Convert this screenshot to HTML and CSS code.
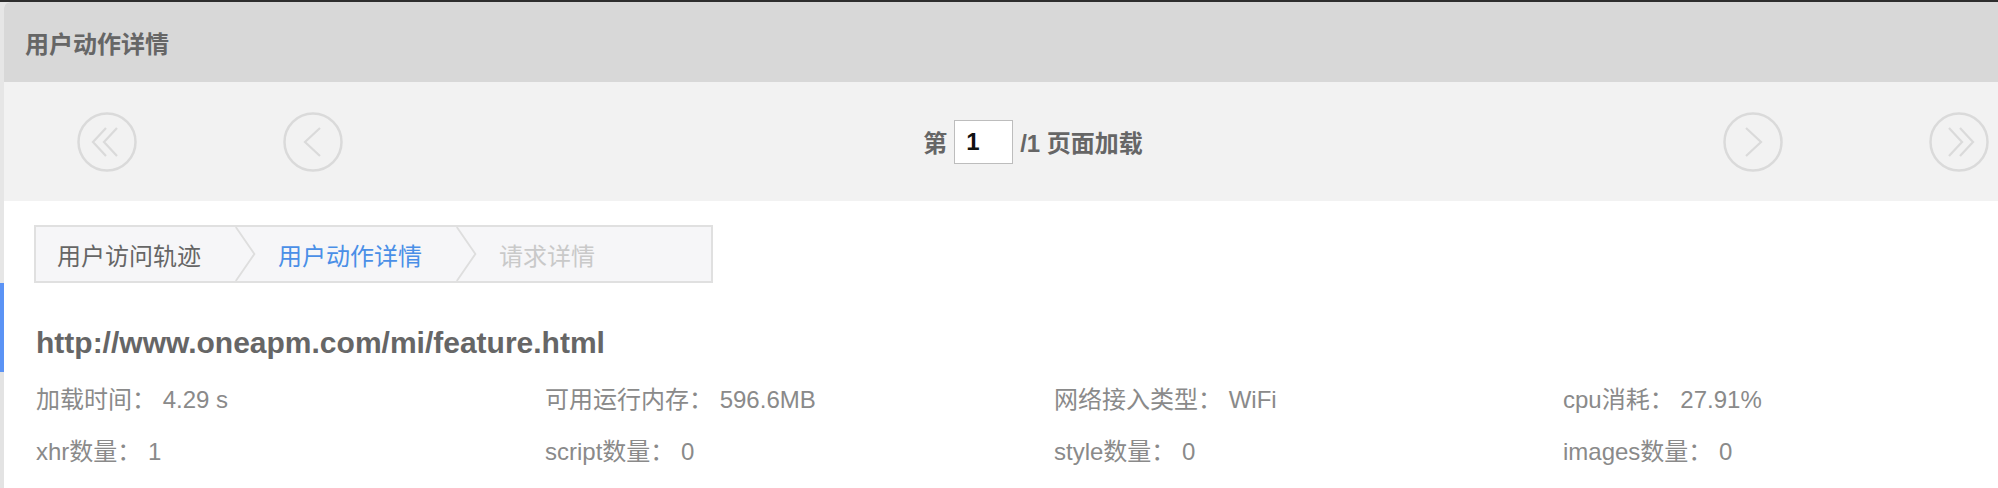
FILE: index.html
```html
<!DOCTYPE html>
<html lang="zh-CN">
<head>
<meta charset="utf-8">
<title>用户动作详情</title>
<link rel="stylesheet" href="styles.css">
</head>
<body>
<div class="topbar"></div>
<div class="layout">
  <div class="rail">
    <div class="rail-top"></div>
    <div class="rail-active"></div>
    <div class="rail-rest"></div>
  </div>
  <div class="panel">
    <div class="panel-header">用户动作详情</div>
    <div class="pager">
      <svg class="pager-btn" viewBox="0 0 60 60" width="60" height="60"><circle cx="30" cy="30" r="28.5"/><polyline points="29,16 16,30 29,44"/><polyline points="40,16 27,30 40,44"/></svg>
      <svg class="pager-btn" viewBox="0 0 60 60" width="60" height="60"><circle cx="30" cy="30" r="28.5"/><polyline points="37,16 22,30 37,44"/></svg>
      <div class="pager-center">
        <span class="pager-label">第</span>
        <input class="pager-input" type="text" value="1">
        <span class="pager-label">/1 页面加载</span>
      </div>
      <svg class="pager-btn" viewBox="0 0 60 60" width="60" height="60"><circle cx="30" cy="30" r="28.5"/><polyline points="23,16 38,30 23,44"/></svg>
      <svg class="pager-btn" viewBox="0 0 60 60" width="60" height="60"><circle cx="30" cy="30" r="28.5"/><polyline points="20,16 33,30 20,44"/><polyline points="31,16 44,30 31,44"/></svg>
    </div>
    <div class="content">
      <div class="crumbs">
        <span class="crumb">用户访问轨迹</span>
        <svg class="crumb-sep" viewBox="0 0 22 58" width="22" height="58"><polyline points="0,0 20,29 0,58"/></svg>
        <span class="crumb crumb-active">用户动作详情</span>
        <svg class="crumb-sep" viewBox="0 0 22 58" width="22" height="58"><polyline points="0,0 20,29 0,58"/></svg>
        <span class="crumb crumb-disabled">请求详情</span>
      </div>
      <div class="url">http://www.oneapm.com/mi/feature.html</div>
      <div class="stats">
        <div class="stat">加载时间： 4.29 s</div>
        <div class="stat">可用运行内存： 596.6MB</div>
        <div class="stat">网络接入类型： WiFi</div>
        <div class="stat">cpu消耗： 27.91%</div>
        <div class="stat">xhr数量： 1</div>
        <div class="stat">script数量： 0</div>
        <div class="stat">style数量： 0</div>
        <div class="stat">images数量： 0</div>
      </div>
    </div>
  </div>
</div>
</body>
</html>
```
FILE: styles.css
```css
html, body {
  margin: 0;
  padding: 0;
}
body {
  background: #ffffff;
  overflow: hidden;
  font-family: "Liberation Sans", "Noto Sans CJK SC", sans-serif;
  width: 1998px;
  height: 488px;
}
.topbar {
  height: 2px;
  background: #2d2d2d;
}
.layout {
  display: flex;
  height: 486px;
  background: #e6e6e6;
}
.rail {
  width: 4px;
  flex: none;
  display: flex;
  flex-direction: column;
}
.rail-top {
  height: 281px;
  background: #e6e6e6;
}
.rail-active {
  height: 89px;
  background: #5b93f5;
}
.rail-rest {
  flex: 1;
  background: #e3e3e3;
}
.panel {
  width: 2058px;
  flex: none;
  background: #ffffff;
  border-top-left-radius: 6px;
  overflow: hidden;
}
.panel-header {
  height: 80px;
  background: #d8d8d8;
  padding-left: 21px;
  display: flex;
  align-items: center;
  font-size: 24px;
  font-weight: bold;
  color: #666666;
}
.pager {
  height: 119px;
  background: #f2f2f2;
  display: grid;
  grid-template-columns: 206px 206px 1fr 206px 206px;
  align-items: center;
  justify-items: center;
}
.pager-btn {
  width: 60px;
  height: 60px;
  fill: none;
  stroke: #dadada;
  stroke-width: 2.5;
}
.pager-btn polyline {
  stroke-width: 2.2;
}
.pager-center {
  display: flex;
  align-items: center;
  gap: 7px;
}
.pager-label {
  font-size: 24px;
  font-weight: bold;
  color: #666666;
}
.pager-input {
  width: 59px;
  height: 44px;
  box-sizing: border-box;
  border: 1px solid #bdbdbd;
  background: #ffffff;
  padding: 0 0 0 11px;
  margin: 0;
  font-family: "Liberation Sans", sans-serif;
  font-size: 24px;
  font-weight: bold;
  color: #111111;
  outline: none;
}
.content {
  padding: 24px 0 0 30px;
}
.crumbs {
  width: 679px;
  height: 58px;
  box-sizing: border-box;
  border: 2px solid #e0e0e0;
  background: #f6f6f8;
  display: flex;
  align-items: center;
}
.crumb {
  padding: 0 34px 0 21px;
  font-size: 24px;
  color: #666666;
  white-space: nowrap;
}
.crumb-active {
  color: #4a8fe7;
}
.crumb-disabled {
  color: #c9c9c9;
}
.crumb-sep {
  flex: none;
  width: 22px;
  height: 54px;
  fill: none;
  stroke: #dedede;
  stroke-width: 2;
}
.url {
  margin-top: 40px;
  padding-left: 2px;
  font-size: 30px;
  line-height: 40px;
  font-weight: bold;
  color: #666666;
}
.stats {
  margin-top: 21px;
  padding-left: 2px;
  display: grid;
  grid-template-columns: 509px 509px 509px 1fr;
  row-gap: 20px;
}
.stat {
  font-size: 24px;
  line-height: 32px;
  color: #8a8a8a;
  white-space: nowrap;
}
```
